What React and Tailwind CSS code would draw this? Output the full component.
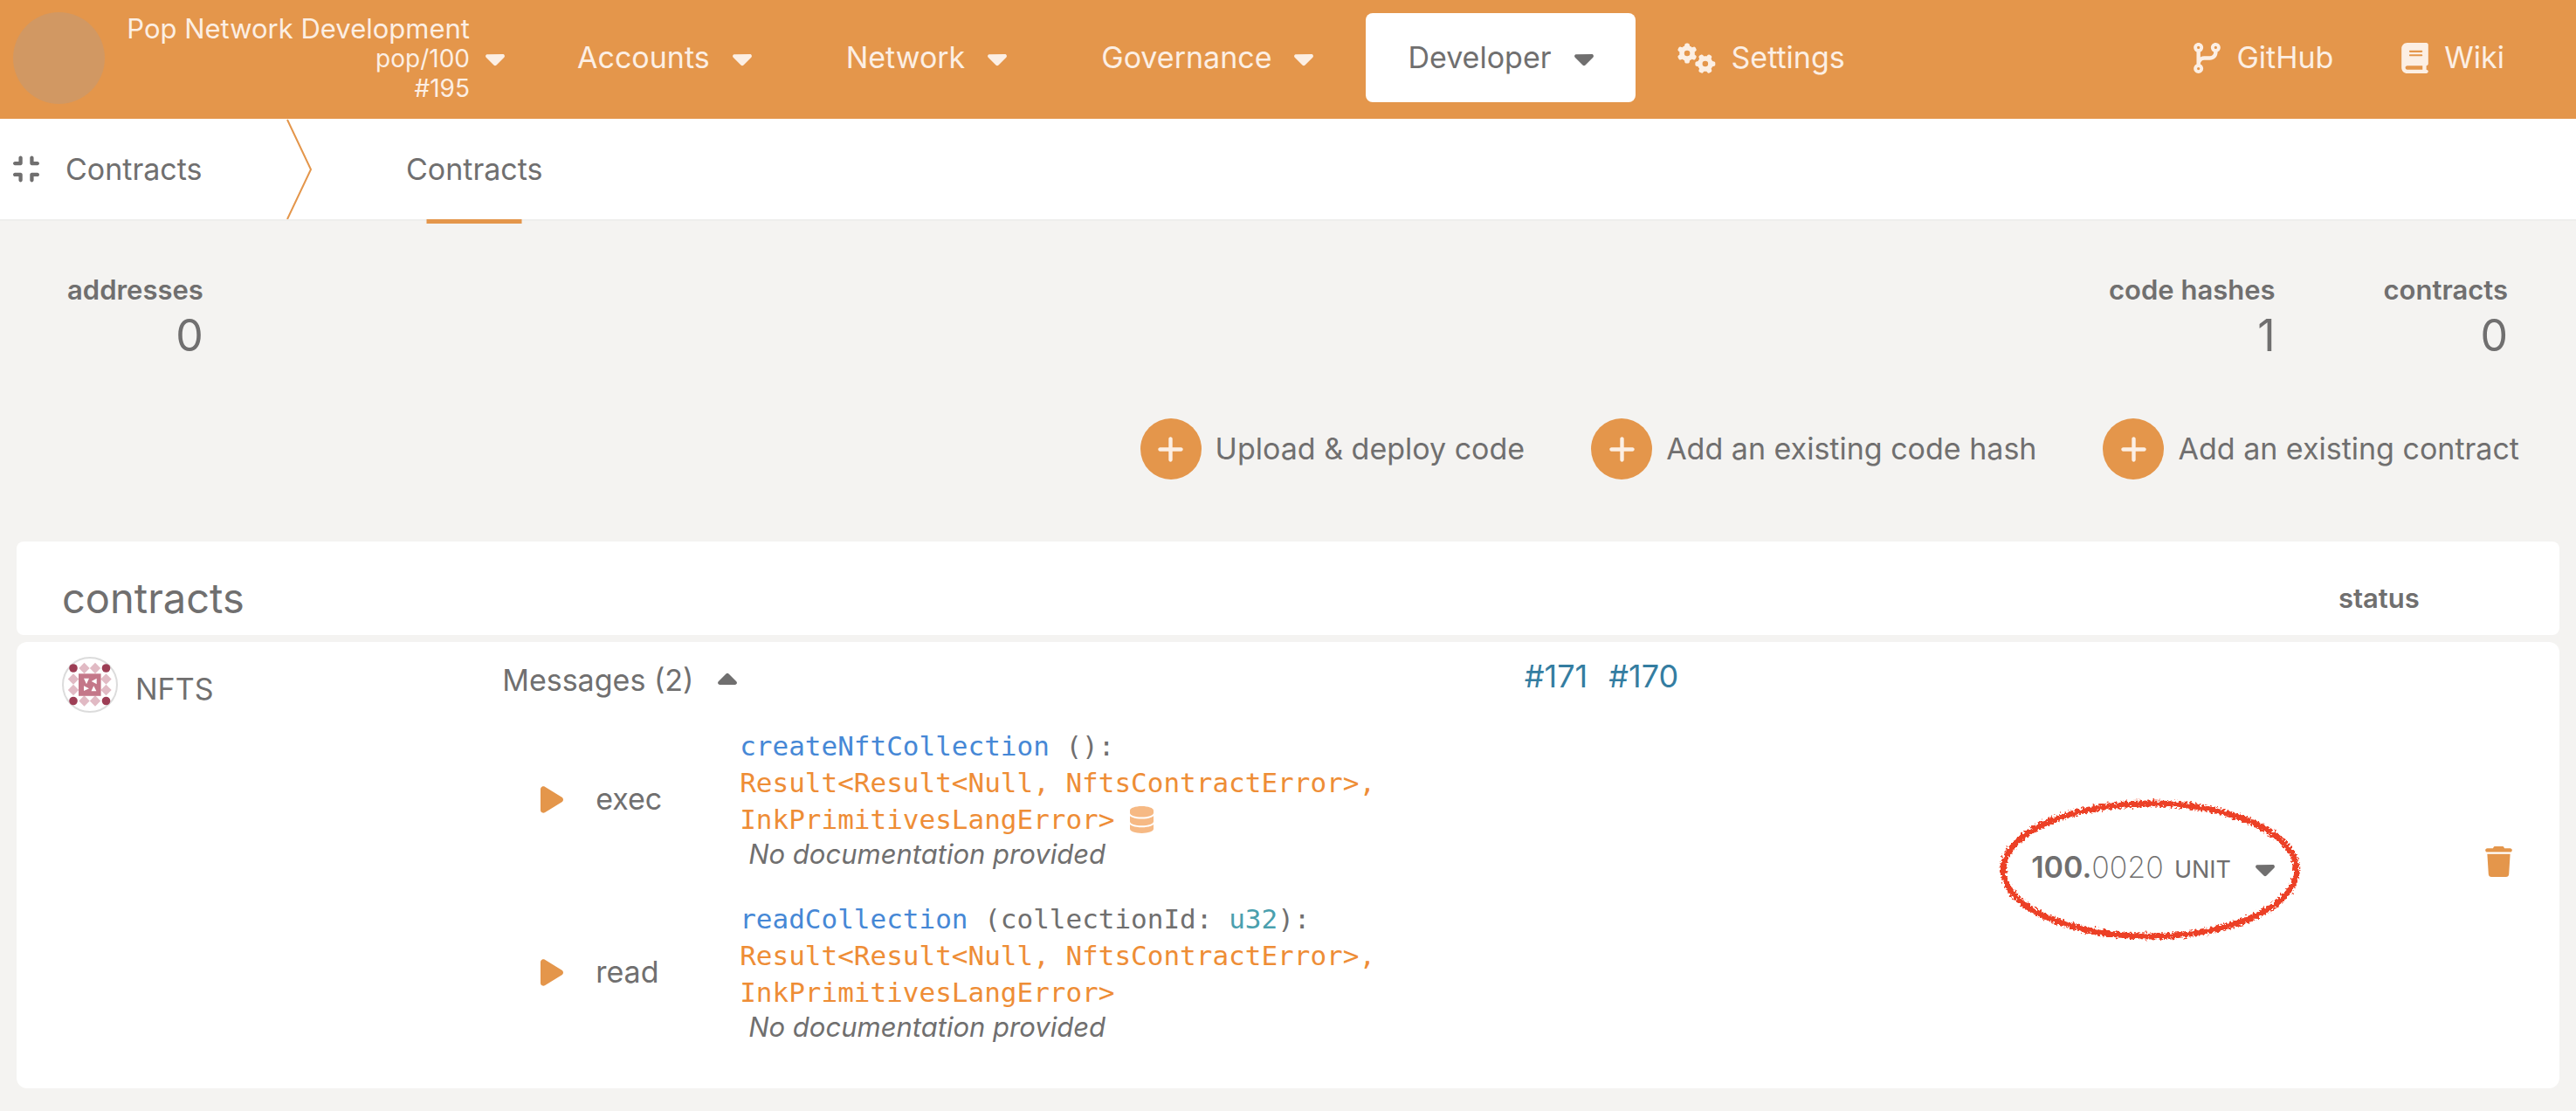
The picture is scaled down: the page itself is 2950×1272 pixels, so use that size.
import React from 'react';
import {
  FaCaretDown,
  FaCaretUp,
  FaGears,
  FaCodeBranch,
  FaBook,
  FaCompress,
  FaPlus,
  FaDatabase,
  FaTrash,
  FaPlay,
} from 'react-icons/fa6';

const menu = [
  { label: 'Accounts' },
  { label: 'Network' },
  { label: 'Governance' },
  { label: 'Developer', active: true },
];

const actions = ['Upload & deploy code', 'Add an existing code hash', 'Add an existing contract'];

function Header() {
  return (
    <header className="flex h-[136px] items-start bg-[#e4964b] text-[#fcefe4]">
      <button type="button" className="flex w-[613px] shrink-0 items-start pl-[15px] text-right">
        <span className="mt-[14px] h-[105px] w-[105px] shrink-0 rounded-full bg-[#d19863]" />
        <span className="mt-[15px] flex w-[418px] flex-col whitespace-nowrap">
          <span className="text-[31px] leading-[35px]">Pop Network Development</span>
          <span className="text-[28px] leading-[34px]">pop/100</span>
          <span className="text-[28px] leading-[34px]">#195</span>
        </span>
        <FaCaretDown className="mt-[49px] ml-[18px] h-[35px] w-[22px]" />
      </button>
      <nav className="mt-[15px] flex gap-3">
        {menu.map(({ label, active }) => (
          <button
            key={label}
            type="button"
            className={
              active
                ? 'flex h-[102px] items-center gap-[26px] rounded-lg bg-white px-12 text-[#706f6f]'
                : 'flex h-[102px] items-center gap-[26px] rounded-lg px-12'
            }
          >
            {label}
            <FaCaretDown className="h-[35px] w-[22px]" />
          </button>
        ))}
        <a href="#settings" className="flex h-[102px] items-center gap-[18px] px-9">
          <FaGears className="h-[35px] w-[44px]" />
          Settings
        </a>
      </nav>
      <div className="mt-[15px] mr-[82px] ml-auto flex h-[102px] items-center gap-[78px]">
        <a href="#github" className="flex items-center gap-[18px]">
          <FaCodeBranch className="h-[35px] w-[31px]" />
          GitHub
        </a>
        <a href="#wiki" className="flex items-center gap-[18px]">
          <FaBook className="h-[35px] w-[31px]" />
          Wiki
        </a>
      </div>
    </header>
  );
}

function Tabs() {
  return (
    <nav className="flex h-[117px] items-center border-b-2 border-[#eeeeec] bg-white pl-[15px]">
      <FaCompress className="h-[35px] w-[30px]" />
      <span className="ml-[30px] w-[253px]">Contracts</span>
      <svg className="h-[115px] w-[30px]" viewBox="0 0 30 115" fill="none" stroke="#e4964b" strokeWidth="2">
        <path d="M1 1L28 58L1 115" />
      </svg>
      <a href="#contracts" className="relative ml-[107px] flex h-full items-center">
        Contracts
        <span className="absolute -bottom-[5px] left-1/2 h-[5px] w-[109px] -translate-x-1/2 bg-[#e4964b]" />
      </a>
    </nav>
  );
}

function Stat({ label, value }) {
  return (
    <div className="flex flex-col text-right">
      <dt className="text-[31px] leading-10 font-semibold">{label}</dt>
      <dd className="text-[50px] leading-[64px]">{value}</dd>
    </div>
  );
}

function Identicon() {
  const spots = [13, 25.5, 38, 50.5];
  return (
    <svg className="h-16 w-16 shrink-0" viewBox="0 0 64 64">
      <circle cx="32" cy="32" r="31" fill="#fff" stroke="#dcdcdc" strokeWidth="2" />
      {spots.flatMap((x, i) =>
        spots.map((y, j) => {
          const edgeX = i === 0 || i === 3;
          const edgeY = j === 0 || j === 3;
          if (edgeX && edgeY) return <circle key={`${i}${j}`} cx={x} cy={y} r="4.8" fill="#9d3e55" />;
          if (edgeX || edgeY)
            return (
              <path key={`${i}${j}`} d={`M${x} ${y - 6.2}L${x + 6.2} ${y}L${x} ${y + 6.2}L${x - 6.2} ${y}Z`} fill="#e1bac4" />
            );
          return null;
        })
      )}
      <path d="M19 19.3H44.6V44.8H19Z" fill="#c47789" />
      <path
        d="M25 24.7H31L28 31.3ZM39.7 24.7V31.3L33.7 28ZM25 33.3V39L31 36.3ZM36.3 33.3L39.4 39.3H33.5Z"
        fill="#fff"
      />
    </svg>
  );
}

function Annotation() {
  return (
    <svg
      className="pointer-events-none absolute -top-[58px] -left-[38px] h-[164px] w-[348px]"
      viewBox="0 0 348 164"
      fill="none"
      stroke="#ec4126"
    >
      <filter id="crayon" x="-5%" y="-10%" width="110%" height="120%">
        <feTurbulence type="fractalNoise" baseFrequency="0.35" numOctaves="3" seed="4" />
        <feDisplacementMap in="SourceGraphic" scale="8" xChannelSelector="R" yChannelSelector="G" />
      </filter>
      <ellipse cx="174" cy="82" rx="168" ry="76" strokeWidth="7" filter="url(#crayon)" />
    </svg>
  );
}

function Message({ action, children }) {
  return (
    <li className="flex items-center">
      <button type="button" className="flex w-[272px] shrink-0 items-center pl-11 text-left">
        <FaPlay className="h-[35px] w-[26px] text-[#e4964b]" />
        <span className="ml-[37px]">{action}</span>
      </button>
      <div className="font-['DejaVu_Sans_Mono',monospace] text-[31px] leading-[42px] text-[#706f6f]">
        {children}
        <p className="pl-[10px] font-['Inter',sans-serif] text-[31px] leading-[38px] italic">No documentation provided</p>
      </div>
    </li>
  );
}

function ContractsTable() {
  return (
    <table className="-my-2 w-full table-fixed border-separate border-spacing-x-0 border-spacing-y-2 text-left">
      <colgroup>
        <col className="w-[19.1%]" />
        <col className="w-[40.2%]" />
        <col className="w-[18.9%]" />
        <col className="w-[16.3%]" />
        <col />
      </colgroup>
      <thead>
        <tr className="h-[107px] bg-white">
          <th className="rounded-l-lg pt-[22px] pl-[52px] text-[47px] font-normal" colSpan={3}>
            contracts
          </th>
          <th className="pt-[22px] text-right text-[31px] font-semibold">status</th>
          <td className="rounded-r-lg" />
        </tr>
      </thead>
      <tbody>
        <tr className="h-[511px] bg-white align-top">
          <td className="rounded-l-xl pt-[17px] pl-[52px]">
            <div className="flex items-center gap-5">
              <Identicon />
              <span className="pt-[10px]">NFTS</span>
            </div>
          </td>
          <td className="pt-5">
            <button type="button" className="flex items-center gap-7 leading-[48px]">
              Messages (2)
              <FaCaretUp className="h-[35px] w-[22px]" />
            </button>
            <ul className="mt-[30px] flex flex-col gap-[34px]">
              <Message action="exec">
                <p>
                  <span className="text-[#4688d6]">createNftCollection</span> ():
                </p>
                <p className="text-[#ee8d36]">Result&lt;Result&lt;Null, NftsContractError&gt;,</p>
                <p className="flex items-center gap-[18px] text-[#ee8d36]">
                  InkPrimitivesLangError&gt;
                  <FaDatabase className="h-[31px] w-[27px] text-[#f6b984]" />
                </p>
              </Message>
              <Message action="read">
                <p>
                  <span className="text-[#4688d6]">readCollection</span> (collectionId:{' '}
                  <span className="text-[#4aa0ae]">u32</span>):
                </p>
                <p className="text-[#ee8d36]">Result&lt;Result&lt;Null, NftsContractError&gt;,</p>
                <p className="text-[#ee8d36]">InkPrimitivesLangError&gt;</p>
              </Message>
            </ul>
          </td>
          <td className="pt-[15px]">
            <div className="flex gap-6 text-[36px] leading-[48px] text-[#347da1]">
              <a href="#171">#171</a>
              <a href="#170">#170</a>
            </div>
          </td>
          <td className="pt-2 pl-[30px] align-middle">
            <div className="relative inline-block">
              <button type="button" className="flex items-center gap-7 whitespace-nowrap">
                <span>
                  <span className="font-semibold">100.</span>
                  <span className="font-extralight">0020</span>
                  <span className="ml-3 text-[27px]">UNIT</span>
                </span>
                <FaCaretDown className="h-[35px] w-[22px]" />
              </button>
              <Annotation />
            </div>
          </td>
          <td className="rounded-r-xl pr-[54px] text-right align-middle">
            <button type="button" aria-label="Forget contract" className="text-[#e4964b]">
              <FaTrash className="h-[35px] w-[31px]" />
            </button>
          </td>
        </tr>
      </tbody>
    </table>
  );
}

export default function App() {
  return (
    <div className="min-h-screen bg-[#f4f3f1] font-['Inter',sans-serif] text-[34px] leading-[42px] text-[#706f6f]">
      <Header />
      <Tabs />
      <main className="pr-[19px] pb-[26px] pl-[19px]">
        <dl className="flex items-start pt-[59px] pr-[59px] pl-[58px]">
          <Stat label="addresses" value="0" />
          <div className="ml-auto flex gap-[124px]">
            <Stat label="code hashes" value="1" />
            <Stat label="contracts" value="0" />
          </div>
        </dl>
        <div className="mt-[63px] mb-[71px] flex justify-end gap-[76px] pr-[46px]">
          {actions.map((label) => (
            <button key={label} type="button" className="flex items-center gap-4">
              <span className="flex h-[70px] w-[70px] items-center justify-center rounded-full bg-[#e4964b] text-[#fcefe4]">
                <FaPlus className="h-[35px] w-[31px]" />
              </span>
              {label}
            </button>
          ))}
        </div>
        <ContractsTable />
      </main>
    </div>
  );
}
